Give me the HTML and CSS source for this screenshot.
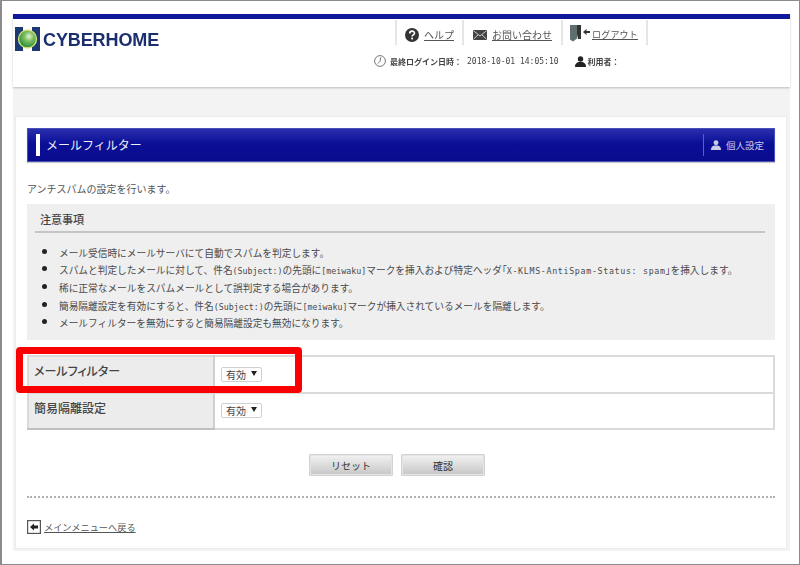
FILE: index.html
```html
<!DOCTYPE html>
<html lang="ja">
<head>
<meta charset="utf-8">
<title>メールフィルター</title>
<link rel="stylesheet" href="styles.css">
</head>
<body>
<div class="frame">
  <div class="page">
    <header class="site-header">
      <div class="logo">
        <svg class="logo-mark" width="25" height="26" viewBox="0 0 25 26">
          <defs>
            <radialGradient id="orb" cx="0.58" cy="0.36" r="0.65">
              <stop offset="0" stop-color="#e4f3da"/>
              <stop offset="0.4" stop-color="#7fbf5f"/>
              <stop offset="1" stop-color="#1f8a3a"/>
            </radialGradient>
          </defs>
          <path d="M0 1h8v4h9V1h8v24h-8v-4H8v4H0z" fill="#1c3a72"/>
          <circle cx="12.5" cy="13" r="9" fill="url(#orb)" stroke="#dfe27a" stroke-width="1.3"/>
        </svg>
        <span class="logo-text">CYBERHOME</span>
      </div>
      <div class="header-tools">
        <nav class="tool-nav">
          <div class="tool tool-help">
            <svg width="14" height="14" viewBox="0 0 14 14"><circle cx="7" cy="7" r="7" fill="#333"/><path d="M4.7 5.4c0-3 4.8-3 4.8-.2 0 1.7-2.4 1.7-2.4 3.3" fill="none" stroke="#fff" stroke-width="1.6"/><rect x="6.2" y="9.6" width="1.8" height="1.8" fill="#fff"/></svg>
            <a href="#">ヘルプ</a>
          </div>
          <div class="tool tool-mail">
            <svg width="14" height="10" viewBox="0 0 14 10"><rect width="14" height="10" fill="#444"/><path d="M0.5 .8 7 6l6.500-5.200M0.500 9.200 5 4.800M13.500 9.200 9 4.800" fill="none" stroke="#ddd" stroke-width=".9"/></svg>
            <a href="#">お問い合わせ</a>
          </div>
          <div class="tool tool-logout">
            <svg width="20" height="17" viewBox="0 0 20 17"><path d="M5 0h6v14H8z" fill="#333"/><path d="M0 0h7v13.500L3 16.500 0 14.500z" fill="#5f6f70"/><path d="M13 7l3.500-3v2h3.500v2h-3.500v2z" fill="#333"/></svg>
            <a href="#">ログアウト</a>
          </div>
        </nav>
        <div class="login-info">
          <svg class="clock" width="12" height="12" viewBox="0 0 12 12"><circle cx="6" cy="6" r="5.400" fill="none" stroke="#666" stroke-width=".9"/><path d="M6.800 2.400 6 6.400 3.800 8.600" fill="none" stroke="#666" stroke-width=".9"/></svg>
          <b class="login-label">最終ログイン日時：</b>
          <span class="latin login-date">2018-10-01 14:05:10</span>
          <svg class="person" width="11" height="11" viewBox="0 0 11 11"><circle cx="5.500" cy="3" r="2.700" fill="#222"/><path d="M0 11c0-3.500 2-4.500 3.500-5h4c1.500.5 3.500 1.500 3.500 5z" fill="#222"/></svg>
          <b class="user-label">利用者：</b>
        </div>
      </div>
    </header>
    <main class="content">
      <section class="card">
        <div class="title-bar">
          <h1 class="title">メールフィルター</h1>
          <a class="personal" href="#">
            <svg width="10" height="10" viewBox="0 0 11 11"><circle cx="5.500" cy="3" r="2.700" fill="#c9cbe6"/><path d="M0 11c0-3.500 2-4.500 3.500-5h4c1.500.5 3.500 1.500 3.500 5z" fill="#c9cbe6"/></svg>
            個人設定
          </a>
        </div>
        <p class="lead">アンチスパムの設定を行います。</p>
        <div class="notice">
          <h2 class="notice-title">注意事項</h2>
          <ul class="notice-list">
            <li>メール受信時にメールサーバにて自動でスパムを判定します。</li>
            <li>スパムと判定したメールに対して、件名<span class="latin">(Subject:)</span>の先頭に<span class="latin">[meiwaku]</span>マークを挿入および特定ヘッダ<span class="tight">「</span><span class="latin latin-wide">X-KLMS-AntiSpam-Status: spam</span><span class="tight">」</span>を挿入します。</li>
            <li>稀に正常なメールをスパムメールとして誤判定する場合があります。</li>
            <li>簡易隔離設定を有効にすると、件名<span class="latin">(Subject:)</span>の先頭に<span class="latin">[meiwaku]</span>マークが挿入されているメールを隔離します。</li>
            <li>メールフィルターを無効にすると簡易隔離設定も無効になります。</li>
          </ul>
        </div>
        <div class="form-wrap">
          <table class="form-table">
            <tr class="row-first">
              <th>メールフィルター</th>
              <td><span class="select-wrap"><select><option>有効</option><option>無効</option></select></span></td>
            </tr>
            <tr class="row-second">
              <th>簡易隔離設定</th>
              <td><span class="select-wrap"><select><option>有効</option><option>無効</option></select></span></td>
            </tr>
          </table>
          <div class="highlight"></div>
        </div>
        <div class="actions">
          <button class="btn" type="button">リセット</button>
          <button class="btn" type="button">確認</button>
        </div>
        <hr class="rule">
        <div class="back">
          <svg width="14" height="14" viewBox="0 0 14 14"><rect x=".6" y=".6" width="12.800" height="12.800" fill="#fff" stroke="#555" stroke-width="1.200"/><path d="M3 7l4-3.500V5.500h4v3H7v2z" fill="#222"/></svg>
          <a href="#">メインメニューへ戻る</a>
        </div>
      </section>
    </main>
  </div>
</div>
</body>
</html>
```
FILE: styles.css
```css
* { box-sizing: border-box; }
html, body { margin: 0; padding: 0; background: #fff; }
body { font-family: "Noto Sans CJK JP", "Liberation Sans", sans-serif; font-size: 10px; color: #444; }
a { color: #555; }

.frame {
  width: 800px; height: 565px; overflow: hidden;
  border: 1px solid #8c8c8c; border-left-width: 2px;
  padding: 13px 9px 13px 11px;
}
.page { height: 100%; display: flex; flex-direction: column; filter: blur(.4px); }

.site-header {
  height: 73px; flex: none; display: flex; background: #fff;
  border-top: 5px solid #10189c;
  box-shadow: 0 1px 2px rgba(0,0,0,.22);
  position: relative;
}
.logo { display: flex; align-items: flex-start; gap: 3px; padding: 7px 0 0 2px; width: 361px; }
.logo-mark { flex: none; }
.logo-text {
  font-family: "Liberation Sans", sans-serif; font-weight: 700; font-size: 18px; line-height: 20px;
  color: #1b2f6e; margin-top: 4px; letter-spacing: -.1px;
}
.header-tools { flex: 1; display: flex; flex-direction: column; }
.tool-nav { display: flex; height: 25px; margin-top: 1px; margin-left: 21px; }
.tool {
  display: flex; align-items: center; height: 25px;
  border-left: 2px solid #e6e6e6; padding-top: 4px;
}
.tool a { font-size: 10px; line-height: 14px; letter-spacing: 0; }
.tool-help { width: 67px; padding-left: 8px; gap: 5px; }
.tool-mail { width: 99px; padding-left: 9px; gap: 5px; }
.tool-logout { width: 87px; padding-left: 7px; gap: 2px; border-right: 2px solid #e6e6e6; }
.tool-logout svg { margin-top: -3px; }
.tool-logout a { font-size: 9px; letter-spacing: .2px; }
.login-info { display: flex; align-items: center; height: 14px; margin-top: 9px; }
.clock { flex: none; margin-right: 4px; }
.login-label, .user-label { font-size: 8px; font-weight: 700; color: #444; white-space: nowrap; }
.login-date { margin-left: 5px; white-space: nowrap; }
.person { flex: none; margin-left: 16px; margin-right: 2px; }

.latin { font-family: "DejaVu Sans Mono", monospace; font-size: 8.300px; }
.latin-wide { letter-spacing: .68px; }
.login-info .latin { font-size: 8px; }
.tight { font-feature-settings: "palt"; }

.content { flex: 1; background: #f3f3f3; padding: 29px 3px 2px 2px; }
.card { height: 100%; background: #fff; border: 1px solid #ececec; padding: 11px 11px 0; }

.title-bar {
  height: 34px; display: flex; align-items: center; justify-content: space-between;
  background: linear-gradient(#2a2fae, #0a0f96 45%, #0a0c8e);
  border: 1px solid #4a4fb8;
  padding-left: 8px;
  box-shadow: 0 1px 1px rgba(0,0,0,.2);
}
.title {
  margin: 0; font-size: 12px; font-weight: 400; color: #f0f0f8; line-height: 22px;
  border-left: 4px solid #fff; padding-left: 6px;
}
.personal {
  display: flex; align-items: center; gap: 5px; height: 22px; margin-right: 10px;
  border-left: 1px solid #5a60c0; padding-left: 7px;
  font-size: 9.500px; color: #c9cbe6; text-decoration: none;
}

.lead { margin: 19px 0 0; line-height: 15px; font-size: 10px; color: #555; }

.notice { margin-top: 8px; height: 136px; background: #efefef; padding: 8px 10px 0 8px; }
.notice-title {
  margin: 0; height: 21px; padding-left: 5px; font-size: 11px; line-height: 14px; font-weight: 500; color: #444;
  border-bottom: 2px solid #c4c4c4;
}
.notice-list { margin: 9.500px 0 0; padding: 0 0 0 24px; list-style: disc; }
.notice-list li { height: 17.700px; line-height: 17.700px; font-size: 9.700px; color: #4a4a4a; white-space: nowrap; }
.notice-list li::marker { color: #222; font-size: 13px; }

.form-wrap { position: relative; margin-top: 15px; }
.form-table { width: 100%; border-collapse: collapse; table-layout: fixed; }
.form-table th, .form-table td { border: 2px solid #dadada; padding: 0; }
.form-table th {
  width: 186px; background: #ececec; text-align: left; vertical-align: top;
  padding: 5px 0 0 5px; font-size: 12px; font-weight: 500; line-height: 18px; color: #444;
  border-right-color: #cfcfcf; font-feature-settings: "palt";
}
.form-table td { padding: 9px 0 0 6px; vertical-align: top; }
.row-first { height: 37px; }
.row-second { height: 36px; }
.row-second th { border-bottom-color: #c0c0c0; }
.row-first td { padding-top: 10px; }

.select-wrap { position: relative; display: inline-block; width: 41px; height: 15px; }
.select-wrap::after {
  content: ""; position: absolute; right: 5px; top: 4px;
  border-left: 3px solid transparent; border-right: 3px solid transparent; border-top: 5px solid #222;
}
.select-wrap select {
  display: block; width: 100%; height: 100%; appearance: none; -webkit-appearance: none;
  font-family: inherit; font-size: 10px; line-height: 13px; color: #444;
  background: #fff; border: 1px solid #d0d0d0; border-radius: 2px; padding: 0 0 0 4px; margin: 0;
}
.highlight {
  position: absolute; left: -11px; top: -8px; width: 286px; height: 46px;
  border: 7px solid #fb0000; border-radius: 4px; pointer-events: none;
}

.actions { display: flex; justify-content: center; gap: 8px; margin-top: 24px; padding-right: 8px; }
.btn {
  width: 84px; height: 22px; padding: 0; font-family: inherit; font-size: 10px; color: #333;
  background: linear-gradient(#f2f2f2, #c6c6c6);
  border: 1px solid #d2d2d2; outline: 1px solid #e4e4e4; outline-offset: -2px;
  border-radius: 1px;
}
.rule { margin: 20px 0 0; height: 2px; border: 0; border-top: 2px dotted #b0b0b0; }
.back { display: flex; align-items: center; gap: 3px; margin-top: 22px; height: 14px; }
.back a { font-size: 9.200px; line-height: 14px; color: #555; }
```
